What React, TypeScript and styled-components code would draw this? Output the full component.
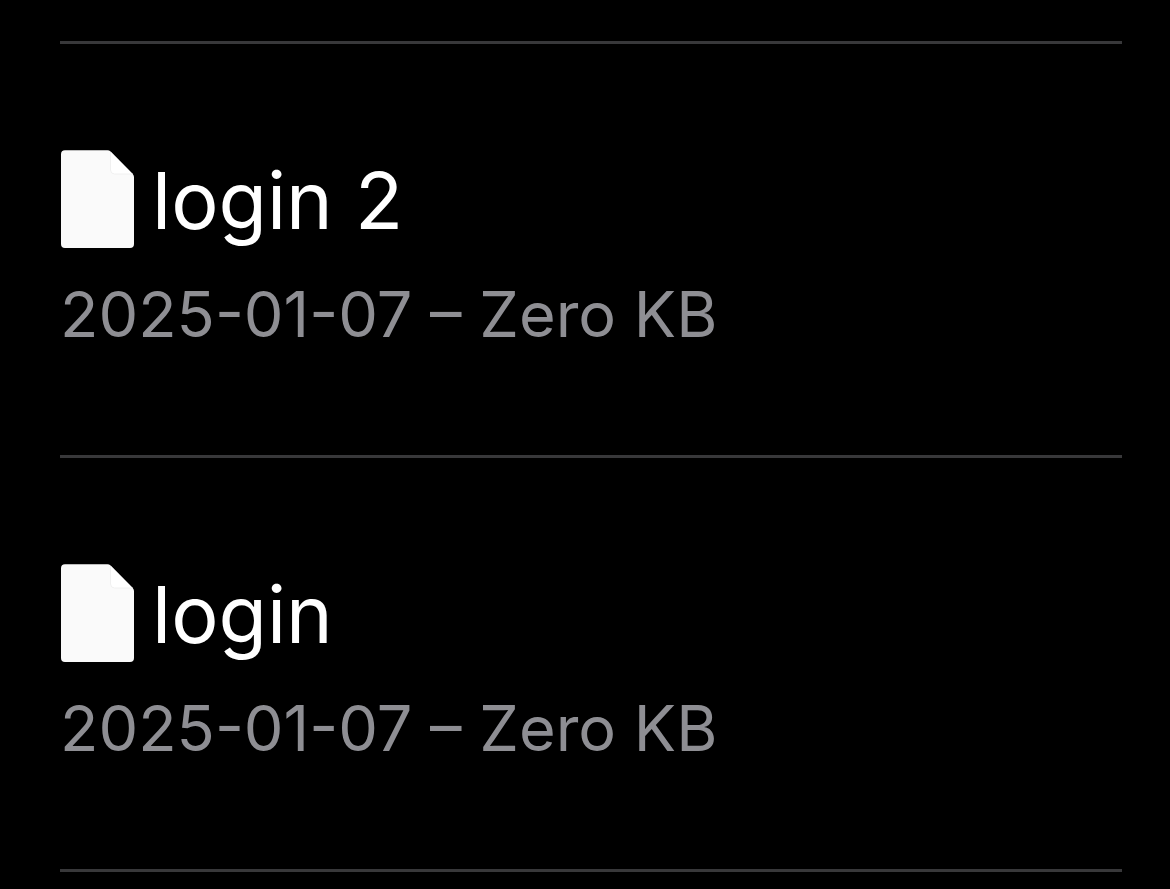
import React from "react";
import styled, { createGlobalStyle } from "styled-components";

const GlobalStyle = createGlobalStyle`
  * { box-sizing: border-box; }
  html, body { margin: 0; background: #000; }
  body { font-family: Inter, "Liberation Sans", sans-serif; overflow-x: hidden; }
`;

const FileList = styled.ul`
  list-style: none;
  margin: 0 48px 0 60px;
  padding: 41px 0 0;
`;

const FileRow = styled.li`
  padding: 106px 0 101px;
  border-top: 3px solid #38383a;
`;

const NameLine = styled.div`
  display: flex;
  align-items: center;
  gap: 16px;
`;

const FileName = styled.h2`
  margin: 0;
  font-size: 79px;
  line-height: 100px;
  font-weight: 400;
  color: #fff;
  white-space: nowrap;
`;

const Details = styled.p`
  margin: 24px 0 0;
  font-size: 63px;
  line-height: 80px;
  font-weight: 400;
  color: #8e8e93;
  white-space: nowrap;
`;

const Closing = styled.li`
  border-top: 3px solid #38383a;
`;

const files = [
  { name: "login 2", date: "2025-01-07", size: "Zero KB" },
  { name: "login", date: "2025-01-07", size: "Zero KB" },
];

const FileIcon = () => (
  <svg width="76" height="100" viewBox="0 0 76 100" aria-hidden="true">
    <path d="M5 0.200H47.500Q49.200 0.200 50.500 1.500L72.700 24Q74 25.300 74 27V94Q74 98 70 98H5Q1 98 1 94V4.200Q1 0.200 5 0.200Z" fill="#fafafa" />
    <path d="M50.500 1.500L73 24.300H54Q50.500 24.300 50.500 21Z" fill="#fff" />
    <path d="M50.500 2V20Q50.500 24 54.500 24H72.500" fill="none" stroke="#f0f0f0" />
  </svg>
);

export default function App() {
  return (
    <>
      <GlobalStyle />
      <FileList>
        {files.map((file) => (
          <FileRow key={file.name}>
            <NameLine>
              <FileIcon />
              <FileName>{file.name}</FileName>
            </NameLine>
            <Details>{file.date} – {file.size}</Details>
          </FileRow>
        ))}
        <Closing />
      </FileList>
    </>
  );
}
